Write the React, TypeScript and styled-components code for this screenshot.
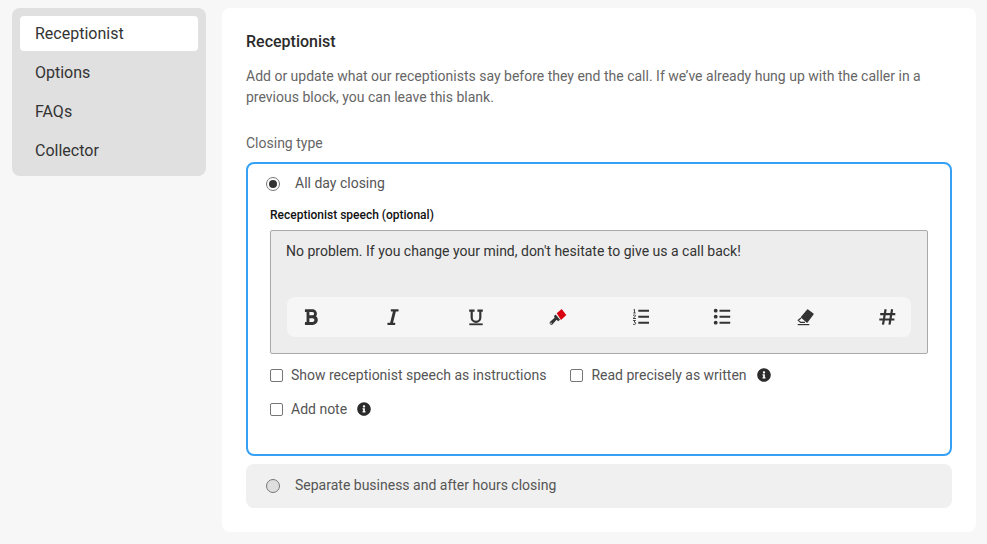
import React from "react";
import styled, { createGlobalStyle } from "styled-components";
import { FaBold, FaItalic, FaInfoCircle } from "react-icons/fa";

const GlobalStyle = createGlobalStyle`
    * {
        margin: 0;
        padding: 0;
        box-sizing: border-box;
    }
    body {
        background-color: #f7f7f7;
        font-family: Roboto, sans-serif;
        color: #333;
    }
`

const Page = styled.div`
    display: flex;
    align-items: flex-start;
    gap: 16px;
    padding: 8px 11px 12px 12px;
    height: 544px;
    overflow: hidden;
`
const Sidebar = styled.nav`
    width: 194px;
    flex: none;
    display: flex;
    flex-direction: column;
    gap: 4px;
    padding: 8px;
    background-color: #e0e0e0;
    border-radius: 8px;
`
const NavItem = styled.div<{ $active?: boolean }>`
    height: 35px;
    line-height: 35px;
    padding-left: 15px;
    font-size: 16px;
    color: #333;
    border-radius: 4px;
    background-color: ${props => props.$active ? '#fff' : 'transparent'};
`
const Main = styled.main`
    flex: 1;
    height: 524px;
    background-color: #fff;
    border-radius: 8px;
    padding: 24px;
`
const Title = styled.h2`
    font-size: 16px;
    line-height: 19px;
    font-weight: 500;
    color: #2b2b2b;
`
const Description = styled.p`
    margin-top: 15px;
    font-size: 14px;
    line-height: 21px;
    color: #666;
`
const FieldLabel = styled.div`
    margin-top: 25px;
    font-size: 14px;
    line-height: 20px;
    color: #666;
`
const SelectedCard = styled.section`
    margin-top: 9px;
    height: 294px;
    border: 2px solid #35a0f4;
    border-radius: 8px;
    padding: 0 22px;
`
const RadioRow = styled.label`
    display: flex;
    align-items: center;
    gap: 15px;
    height: 38px;
    font-size: 14px;
    color: #555;
`
const Radio = styled.span<{ $checked?: boolean }>`
    width: 14px;
    height: 14px;
    margin: 2px 0 0 -4px;
    flex: none;
    display: flex;
    align-items: center;
    justify-content: center;
    border-radius: 50%;
    border: 1px solid #777;
    background-color: ${props => props.$checked ? '#fff' : '#dedede'};
    &::after {
        content: "";
        display: ${props => props.$checked ? 'block' : 'none'};
        width: 8px;
        height: 8px;
        border-radius: 50%;
        background-color: #333;
    }
`
const SpeechLabel = styled.div`
    margin-top: 6px;
    font-size: 12px;
    line-height: 14px;
    font-weight: 500;
    color: #111;
`
const SpeechBox = styled.div`
    margin-top: 8px;
    height: 124px;
    display: flex;
    flex-direction: column;
    justify-content: space-between;
    padding: 10px 15px 16px;
    background-color: #ededed;
    border: 1px solid #a9a9a9;
    border-radius: 2px;
    font-size: 14px;
    line-height: 20px;
    color: #333;
`
const Toolbar = styled.div`
    height: 40px;
    margin: 0 1px;
    display: flex;
    align-items: center;
    justify-content: space-between;
    padding: 0 12px;
    background-color: #f6f6f6;
    border-radius: 8px;
    color: #333;
`
const ToolIcon = styled.span`
    width: 24px;
    height: 24px;
    display: flex;
    align-items: center;
    justify-content: center;
    font-size: 18px;
`
const CheckRow = styled.div`
    display: flex;
    align-items: center;
    gap: 24px;
    height: 34px;
`
const FirstCheckRow = styled(CheckRow)`
    margin-top: 4px;
`
const CheckItem = styled.label`
    display: flex;
    align-items: center;
    font-size: 14px;
    color: #555;
`
const Checkbox = styled.span`
    width: 13px;
    height: 13px;
    margin-right: 8px;
    border: 1px solid #767676;
    border-radius: 2px;
    background-color: #fff;
`
const Info = styled.span`
    display: flex;
    margin-left: 10px;
    font-size: 14px;
    color: #2b2b2b;
`
const OtherCard = styled.section`
    margin-top: 8px;
    height: 44px;
    display: flex;
    align-items: center;
    padding: 0 24px;
    background-color: #f0f0f0;
    border-radius: 8px;
`
const OtherRow = styled(RadioRow)`
    height: auto;
    padding-bottom: 2px;
`

const UnderlineIcon = () => (
    <svg width="24" height="24" viewBox="0 0 24 24">
        <path d="M5.2 5.6h5.4M13.4 5.6h5.4M7.7 5.6v6.9a4.3 4.3 0 0 0 8.6 0V5.6" fill="none" stroke="#333" strokeWidth="2.2" />
        <rect x="5.3" y="18.4" width="13.4" height="1.8" fill="#333" />
    </svg>
)
const HighlighterIcon = () => (
    <svg width="24" height="24" viewBox="0 0 24 24">
        <path d="M10.7 8.3 L15.7 4 L20.3 10 L15 15 Z" fill="#d9000f" />
        <path d="M9.7 9.5 L14 14.8 L12.2 16.3 L10.6 14.8 L6.4 19.5 A1.9 1.9 0 0 1 3.8 17 L8.6 12.8 L8 11 Z" fill="#333" />
        <circle cx="5" cy="18.2" r="0.7" fill="#f6f6f6" />
    </svg>
)
const OrderedListIcon = () => (
    <svg width="24" height="24" viewBox="0 0 24 24">
        <path d="M5.5 4.9 L6.5 4.4V8M5.3 8H7.7M5 10.5Q6.5 9.3 7.6 10.5Q7.5 11.5 5 13.5H8M5 15.5H7.5L6 17Q8 17.2 7.7 18.8Q6.8 20 5 19.2" fill="none" stroke="#333" strokeWidth="0.9" />
        <path d="M10.3 5.7H21M10.3 11.7H21M10.3 17.7H21" stroke="#333" strokeWidth="1.9" />
    </svg>
)
const BulletListIcon = () => (
    <svg width="24" height="24" viewBox="0 0 24 24">
        <circle cx="5.7" cy="5.7" r="1.9" fill="#333" />
        <circle cx="5.7" cy="11.7" r="1.9" fill="#333" />
        <circle cx="5.7" cy="17.7" r="1.9" fill="#333" />
        <path d="M9.5 5.7H20.2M9.5 11.7H20.2M9.5 17.7H20.2" stroke="#333" strokeWidth="1.9" />
    </svg>
)
const EraserIcon = () => (
    <svg width="24" height="24" viewBox="0 0 24 24">
        <path d="M14.7 5 L20 9 L14 17 L8.6 12.3 Z" fill="#333" stroke="#333" strokeWidth="1.4" strokeLinejoin="round" />
        <path d="M8 13 L5.3 15.2 L7.6 17.4 H12" fill="none" stroke="#333" strokeWidth="1.2" />
        <rect x="4.7" y="19" width="11.6" height="1.2" fill="#333" />
    </svg>
)
const HashIcon = () => (
    <svg width="24" height="24" viewBox="0 0 24 24">
        <path d="M10.6 4.3L8 19.6M17.1 4.3L14.5 19.6M5.2 9.2H20.3M4.3 14.5H19.4" fill="none" stroke="#333" strokeWidth="2.2" />
    </svg>
)

export default function App() {
    return (
        <>
            <GlobalStyle />
            <Page>
                <Sidebar>
                    <NavItem $active>Receptionist</NavItem>
                    <NavItem>Options</NavItem>
                    <NavItem>FAQs</NavItem>
                    <NavItem>Collector</NavItem>
                </Sidebar>
                <Main>
                    <Title>Receptionist</Title>
                    <Description>
                        Add or update what our receptionists say before they end the call. If we’ve already hung up with the caller in a previous block, you can leave this blank.
                    </Description>
                    <FieldLabel>Closing type</FieldLabel>
                    <SelectedCard>
                        <RadioRow>
                            <Radio $checked />
                            All day closing
                        </RadioRow>
                        <SpeechLabel>Receptionist speech (optional)</SpeechLabel>
                        <SpeechBox>
                            <div>No problem. If you change your mind, don't hesitate to give us a call back!</div>
                            <Toolbar>
                                <ToolIcon><FaBold /></ToolIcon>
                                <ToolIcon><FaItalic /></ToolIcon>
                                <ToolIcon><UnderlineIcon /></ToolIcon>
                                <ToolIcon><HighlighterIcon /></ToolIcon>
                                <ToolIcon><OrderedListIcon /></ToolIcon>
                                <ToolIcon><BulletListIcon /></ToolIcon>
                                <ToolIcon><EraserIcon /></ToolIcon>
                                <ToolIcon><HashIcon /></ToolIcon>
                            </Toolbar>
                        </SpeechBox>
                        <FirstCheckRow>
                            <CheckItem><Checkbox />Show receptionist speech as instructions</CheckItem>
                            <CheckItem><Checkbox />Read precisely as written<Info><FaInfoCircle /></Info></CheckItem>
                        </FirstCheckRow>
                        <CheckRow>
                            <CheckItem><Checkbox />Add note<Info><FaInfoCircle /></Info></CheckItem>
                        </CheckRow>
                    </SelectedCard>
                    <OtherCard>
                        <OtherRow>
                            <Radio />
                            Separate business and after hours closing
                        </OtherRow>
                    </OtherCard>
                </Main>
            </Page>
        </>
    )
}
